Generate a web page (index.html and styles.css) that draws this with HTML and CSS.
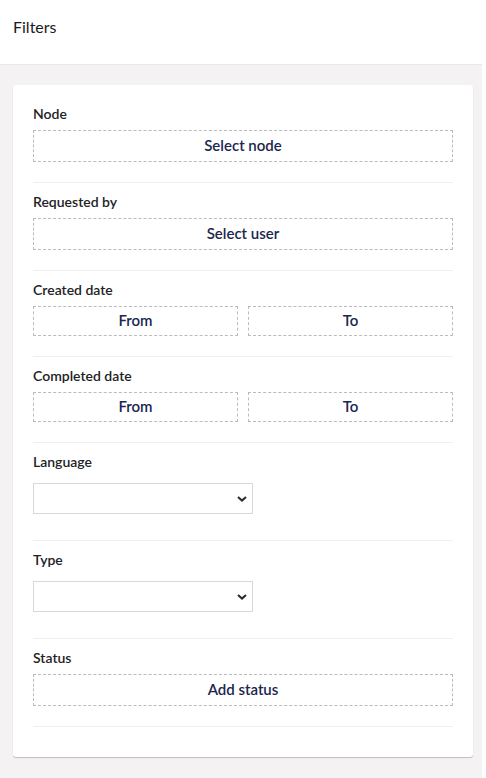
FILE: index.html
```html
<!DOCTYPE html>
<html lang="en">
<head>
<meta charset="utf-8">
<title>Filters</title>
<link rel="stylesheet" href="styles.css">
</head>
<body>
<div class="app">
  <header class="header">
    <h1 class="title">Filters</h1>
  </header>
  <main class="main">
    <div class="card">
      <div class="section">
        <div class="label">Node</div>
        <button class="dashed">Select node</button>
      </div>
      <div class="section">
        <div class="label">Requested by</div>
        <button class="dashed">Select user</button>
      </div>
      <div class="section">
        <div class="label">Created date</div>
        <div class="pair">
          <button class="dashed short">From</button>
          <button class="dashed short">To</button>
        </div>
      </div>
      <div class="section">
        <div class="label">Completed date</div>
        <div class="pair">
          <button class="dashed short">From</button>
          <button class="dashed short">To</button>
        </div>
      </div>
      <div class="section select-section">
        <div class="label">Language</div>
        <div class="select">
          <svg class="chev" viewBox="0 0 10 6" width="10" height="6"><path d="M1 1l4 3.6L9 1" fill="none" stroke="#2b2b2b" stroke-width="2"/></svg>
        </div>
      </div>
      <div class="section select-section">
        <div class="label">Type</div>
        <div class="select">
          <svg class="chev" viewBox="0 0 10 6" width="10" height="6"><path d="M1 1l4 3.6L9 1" fill="none" stroke="#2b2b2b" stroke-width="2"/></svg>
        </div>
      </div>
      <div class="section">
        <div class="label">Status</div>
        <button class="dashed">Add status</button>
      </div>
    </div>
  </main>
</div>
</body>
</html>
```
FILE: styles.css
```css
* { box-sizing: border-box; }
html, body { margin: 0; padding: 0; height: 100%; }
body {
  background: #ffffff;
  font-family: Lato, "Noto Sans", sans-serif;
  color: #1b1b1d;
}
.app {
  width: 482px;
  min-height: 100%;
  display: flex;
  flex-direction: column;
  background: #f4f2f2;
}
.header {
  height: 65px;
  background: #ffffff;
  border-bottom: 1px solid #e9e8ea;
  display: flex;
  align-items: center;
  padding: 0 13px 12px;
}
.title {
  margin: 0;
  font-size: 16px;
  font-weight: 400;
  color: #1b1b1d;
}
.main {
  flex: 1;
  padding: 20px 9px 20px 13px;
}
.card {
  background: #ffffff;
  border-radius: 3px;
  box-shadow: 0 1px 1px rgba(0, 0, 0, 0.22);
  padding: 10px 20px 30px;
}
.section {
  padding: 9px 0 20px;
  border-bottom: 1px solid #efeef0;
}
.label {
  font-size: 14px;
  font-weight: 600;
  line-height: 20px;
  margin-bottom: 6px;
  color: #222224;
}
.dashed {
  display: block;
  width: 100%;
  height: 32px;
  margin: 0;
  padding: 0 0 3px;
  background: #ffffff;
  border: 1px dashed #bbbabf;
  border-radius: 0;
  font-family: Lato, "Noto Sans", sans-serif;
  font-size: 15px;
  font-weight: 600;
  color: #1b264f;
}
.dashed.short { height: 30px; padding-bottom: 2px; }
.pair {
  display: grid;
  grid-template-columns: 1fr 1fr;
  gap: 10px;
}
.select-section { padding-bottom: 26px; }
.select-section .label { margin-bottom: 11px; }
.select {
  width: 220px;
  height: 31px;
  border: 1px solid #d8d7d9;
  background: #ffffff;
  display: flex;
  align-items: center;
  justify-content: flex-end;
  padding-right: 5px;
}
.chev { display: block; }
```
